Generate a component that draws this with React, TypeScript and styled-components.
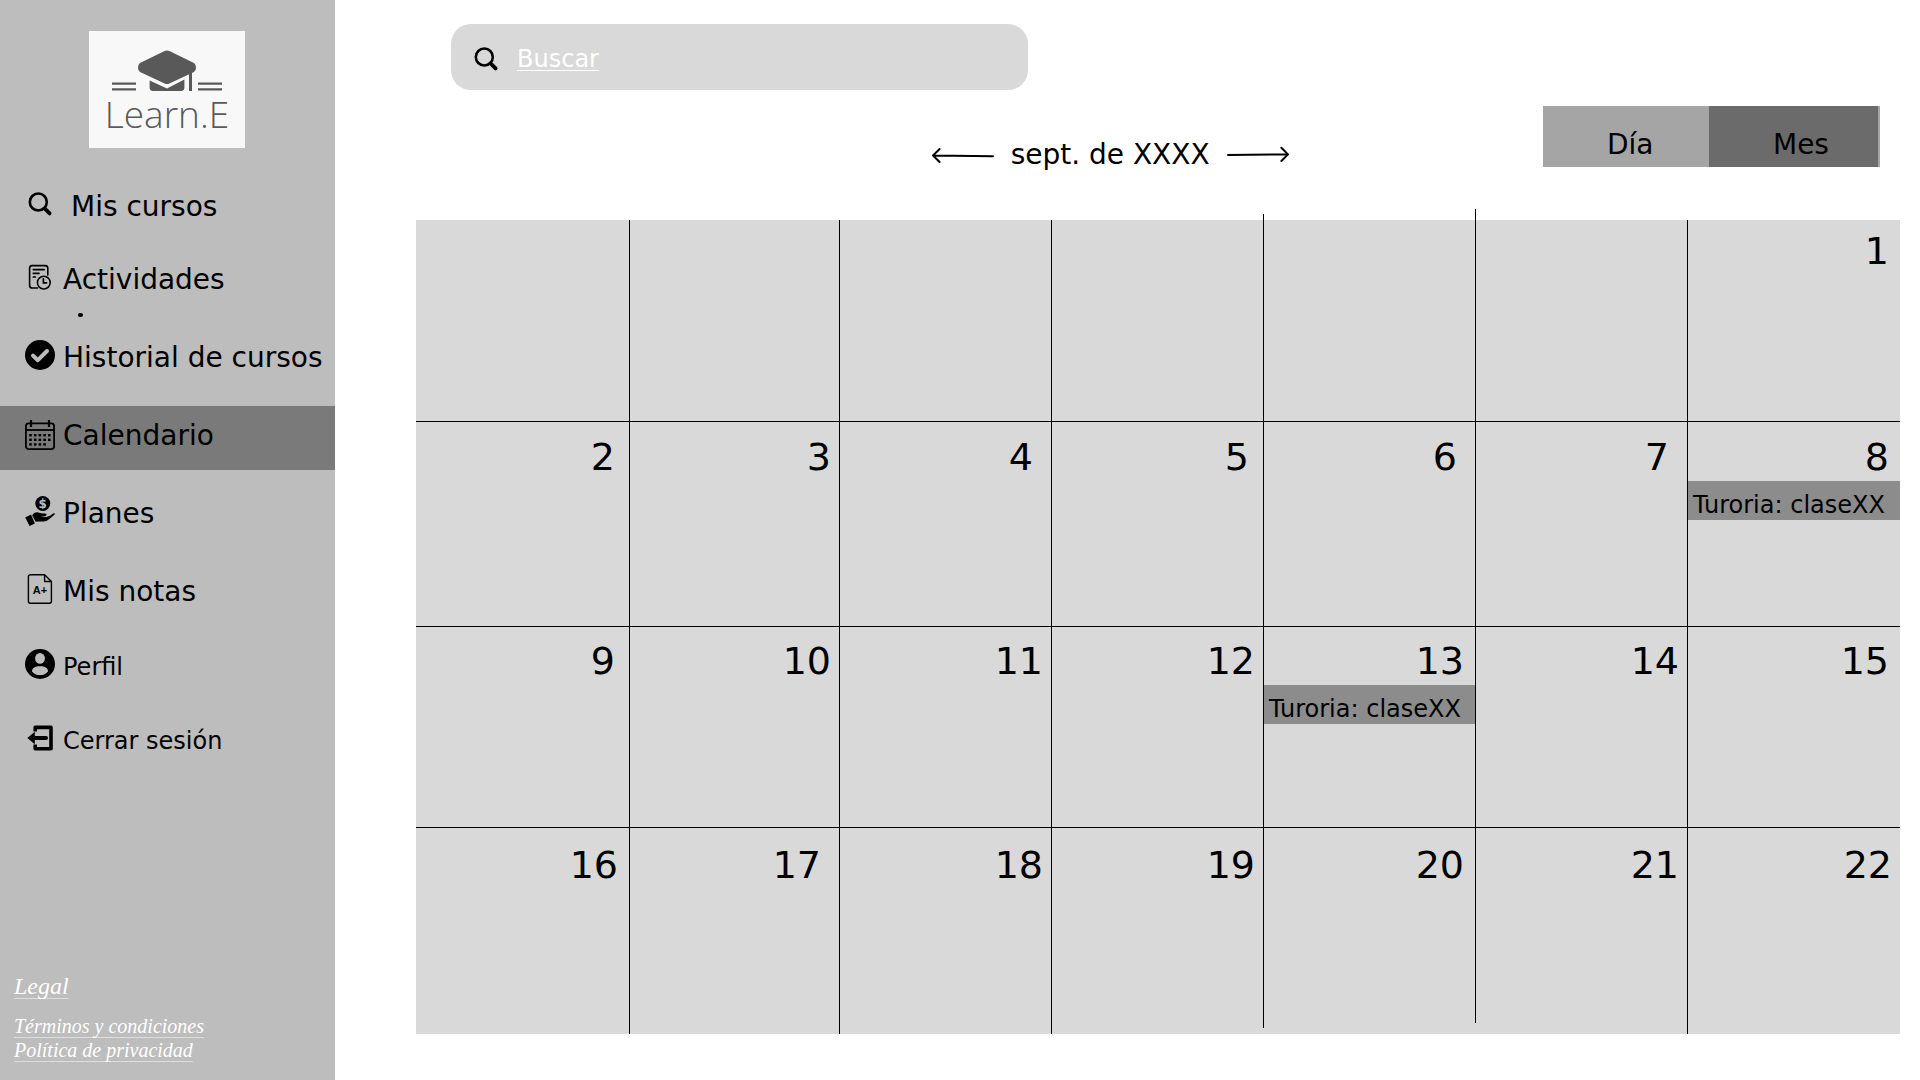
import React from "react";
import styled, { createGlobalStyle } from "styled-components";

const GlobalStyle = createGlobalStyle`
  *, *::before, *::after { box-sizing: border-box; }
  body {
    margin: 0;
    background: #fff;
    color: #000;
    font-family: "DejaVu Sans", Verdana, sans-serif;
    font-size: 28px;
  }
  button, input { font: inherit; color: inherit; border: 0; }
  a { color: inherit; text-decoration: none; }
  svg { display: block; flex: none; }
`;

const Page = styled.div`
  display: flex;
  min-height: 100vh;
`;

const Sidebar = styled.aside`
  display: flex;
  flex-direction: column;
  flex: none;
  width: 335px;
  padding: 31px 0 18px;
  background: #bdbdbd;
`;

const Logo = styled.a`
  display: flex;
  flex-direction: column;
  align-items: center;
  width: 156px;
  height: 117px;
  margin-left: 89px;
  padding-top: 19px;
  background: #f8f8f8;
  color: #595959;
`;

const LogoName = styled.span`
  font-family: "Open Sans", "Noto Sans", sans-serif;
  font-size: 37px;
  font-weight: 300;
  line-height: 44px;
`;

const NavList = styled.ul`
  display: flex;
  flex-direction: column;
  gap: 14px;
  margin: 28px 0 0;
  padding: 0;
  list-style: none;
`;

const NavItem = styled.li`
  position: relative;
`;

const NavLink = styled.a<{ $kind?: "lead" | "small"; $active?: boolean }>`
  display: flex;
  align-items: center;
  gap: ${(p) => (p.$kind === "lead" ? 16 : 8)}px;
  height: ${(p) => (p.$kind ? 60 : 64)}px;
  padding: 0 0 ${(p) => (p.$kind === "lead" ? 0 : 6)}px 25px;
  font-size: ${(p) => (p.$kind === "small" ? 24 : 28)}px;
  white-space: nowrap;
  background: ${(p) => (p.$active ? "#7a7a7a" : "transparent")};

  svg { margin-bottom: ${(p) => (p.$active ? 0 : p.$kind === "small" ? 7 : 4)}px; }
`;

const Dot = styled.span`
  position: absolute;
  left: 78px;
  bottom: -3px;
  width: 5px;
  height: 4px;
  border-radius: 2px;
  background: #000;
`;

const Legal = styled.footer`
  display: flex;
  flex-direction: column;
  align-items: flex-start;
  margin-top: auto;
  padding-left: 14px;
  color: #fff;
  font-family: "Liberation Serif", "Times New Roman", serif;
  font-style: italic;
  font-size: 20px;
  line-height: 24px;
`;

const LegalLink = styled.a<{ $title?: boolean }>`
  margin-bottom: ${(p) => (p.$title ? 16 : 0)}px;
  font-size: ${(p) => (p.$title ? 24 : 20)}px;
  text-decoration: underline;
  text-decoration-color: rgba(255, 255, 255, 0.5);
  text-decoration-thickness: 1px;
  text-decoration-skip-ink: none;
  text-underline-offset: 4px;
`;

const Main = styled.main`
  flex: 1;
  min-width: 0;
  padding: 24px 20px 46px 81px;
`;

const SearchBox = styled.label`
  display: flex;
  align-items: center;
  gap: 16px;
  width: 577px;
  max-width: 100%;
  height: 66px;
  margin-left: 35px;
  padding: 4px 20px 0;
  border-radius: 20px;
  background: #d9d9d9;
`;

const SearchInput = styled.input`
  flex: 1;
  min-width: 0;
  height: 40px;
  padding: 0;
  background: transparent;
  color: #fff;
  font-size: 24px;
  outline: none;

  &::placeholder {
    color: #fff;
    opacity: 1;
    text-decoration: underline;
    text-decoration-thickness: 1px;
    text-underline-offset: 3px;
  }
`;

const Toolbar = styled.div`
  display: grid;
  grid-template-columns: minmax(0, 516fr) auto minmax(0, 254fr) auto;
  align-items: start;
  margin: 16px 20px 49px 0;
`;

const MonthNav = styled.div`
  display: flex;
  grid-column: 2;
  align-items: center;
  gap: 16px;
  padding-top: 33px;
`;

const MonthName = styled.h1`
  margin: 0;
  font-size: 28px;
  font-weight: 400;
  line-height: 32px;
  white-space: nowrap;
`;

const ArrowButton = styled.button`
  padding: 0;
  background: none;
  cursor: pointer;
`;

const ViewSwitch = styled.div`
  display: flex;
  grid-column: 4;
  padding-right: 2px;
  background: #a5a5a5;
`;

const ViewButton = styled.button<{ $active?: boolean }>`
  width: ${(p) => (p.$active ? 169 : 166)}px;
  height: 61px;
  padding: 16px 0 0 64px;
  background: ${(p) => (p.$active ? "#6b6b6b" : "#a5a5a5")};
  text-align: left;
  cursor: pointer;
`;

const Calendar = styled.table`
  width: 100%;
  table-layout: fixed;
  border-spacing: 0;
  background: #d9d9d9;
`;

const Column = styled.col<{ $width?: number }>`
  width: ${(p) => (p.$width ? `${p.$width}px` : "auto")};
`;

const Week = styled.tr<{ $height: number }>`
  height: ${(p) => p.$height}px;
`;

const insets = { tight: 8, normal: 11, wide: 14, loose: 18 };
type Inset = keyof typeof insets;

/* The rule at the left of a cell is a pseudo-element, since some rules
   start above the grid and stop short of its foot by the same length. */
const Day = styled.td<{ $lead: number; $rise: number; $first: boolean; $last: boolean; $rule: boolean }>`
  position: relative;
  padding: ${(p) => p.$lead}px 0 0;
  border-top: ${(p) => (p.$first ? "0" : "1px solid #000")};
  vertical-align: top;

  &::before {
    content: "";
    display: ${(p) => (p.$rule ? "block" : "none")};
    position: absolute;
    left: 0;
    top: ${(p) => (p.$first ? -p.$rise : 0)}px;
    bottom: ${(p) => (p.$last ? p.$rise : 0)}px;
    width: 1px;
    background: #000;
  }
`;

const DayNumber = styled.div<{ $inset: Inset }>`
  padding-right: ${(p) => insets[p.$inset]}px;
  font-size: 38px;
  line-height: 40px;
  text-align: right;
`;

const EventLink = styled.a`
  display: block;
  height: 39px;
  margin: 4px 0 0 1px;
  padding: 8px 0 0 5px;
  overflow: hidden;
  background: #8c8c8c;
  font-size: 24px;
  line-height: 32px;
  white-space: nowrap;
`;

const SearchIcon = () => (
  <svg width="30" height="30" viewBox="0 0 30 30" fill="none" stroke="#000" strokeLinecap="round">
    <circle cx="13.3" cy="13" r="8.5" strokeWidth="2.6" />
    <path d="M19.6 19.4 L24.6 24.4" strokeWidth="3.8" />
  </svg>
);

const TaskIcon = () => (
  <svg width="30" height="30" viewBox="0 0 30 30" fill="none" stroke="#000" strokeWidth="1.6" strokeLinecap="round">
    <path d="M12.5 26 H7.2 A2.6 2.6 0 0 1 4.6 23.4 V6.2 A2.6 2.6 0 0 1 7.2 3.6 H20.2 A2.6 2.6 0 0 1 22.8 6.2 V13" />
    <path d="M8.3 7.6 H19.2 M8.3 11.3 H14 M8.3 15 H10.4" strokeWidth="1.7" />
    <circle cx="18.8" cy="20.6" r="6.4" />
    <path d="M18.4 16.8 V20.8 H21.6" strokeWidth="1.7" />
  </svg>
);

const CheckIcon = () => (
  <svg width="30" height="30" viewBox="0 0 30 30">
    <circle cx="15" cy="15" r="15" />
    <path d="M8 15.6 L12.8 20.2 L22 11" fill="none" stroke="#bdbdbd" strokeWidth="4" strokeLinecap="round" strokeLinejoin="round" />
  </svg>
);

const dotRows = [
  { y: 14, xs: [4.2, 8.9, 13.6, 18.3, 23] },
  { y: 18.6, xs: [4.2, 8.9, 13.6, 18.3, 23] },
  { y: 23.2, xs: [4.2, 8.9, 13.6, 18.3] },
];

const CalendarIcon = () => (
  <svg width="30" height="30" viewBox="0 0 30 30">
    <rect x="0.9" y="3.3" width="28.2" height="25.8" rx="2.8" fill="none" stroke="#000" strokeWidth="1.8" />
    <path d="M1 10 H29" stroke="#000" strokeWidth="1.8" />
    <path d="M6 0 V7 M24 0 V7" stroke="#000" strokeWidth="2.2" />
    {dotRows.map((row) => row.xs.map((x) => <rect key={`${x}-${row.y}`} x={x} y={row.y} width="2.6" height="2.4" />))}
  </svg>
);

const PlansIcon = () => (
  <svg width="30" height="30" viewBox="0 0 30 30">
    <circle cx="17.8" cy="7.5" r="7.5" />
    <text x="17.8" y="12" fill="#bdbdbd" fontFamily="DejaVu Sans, sans-serif" fontSize="12" fontWeight="700" textAnchor="middle">$</text>
    <path d="M0.2 21.5 L6 18.6 L9.8 27.4 L4.6 30 Z" />
    <path d="M7.2 19.4 C8.6 16.8 11 16 13.4 16.5 C15.6 17.2 17.4 17.4 20 17.5 C22 17.7 22 19.8 20.2 20.1 L15.6 20.5 L21.4 20.9 C24.4 20.3 26.6 18.6 28.6 17.2 C29.8 16.9 30.3 17.8 29.6 18.6 C27 21.2 24.4 23.4 21.6 25 C17.8 25.8 14 25.3 10.6 25.7 Z" />
  </svg>
);

const GradesIcon = () => (
  <svg width="30" height="30" viewBox="0 0 30 30">
    <path d="M19.6 0.7 H5.4 A2 2 0 0 0 3.4 2.7 V27.3 A2 2 0 0 0 5.4 29.3 H24.4 A2 2 0 0 0 26.4 27.3 V7.5 Z M19.6 0.7 V7.5 H26.4" fill="none" stroke="#000" strokeWidth="1.4" strokeLinejoin="round" />
    <text x="15" y="19.6" fontFamily="Liberation Sans, sans-serif" fontSize="11" fontWeight="700" textAnchor="middle">A+</text>
  </svg>
);

const ProfileIcon = () => (
  <svg width="30" height="30" viewBox="0 0 30 30">
    <circle cx="15" cy="15" r="15" />
    <ellipse cx="15" cy="9.4" rx="4.9" ry="5.4" fill="#bdbdbd" />
    <path d="M7 22.4 C7 18.8 10 17.2 15 17.2 C20 17.2 23 18.8 23 22.4 C21.2 24.8 18.4 26 15 26 C11.6 26 8.8 24.8 7 22.4 Z" fill="#bdbdbd" />
  </svg>
);

const LogoutIcon = () => (
  <svg width="30" height="30" viewBox="0 0 30 30" fill="none" stroke="#000" strokeWidth="3.6">
    <path d="M10.2 8.5 V4.4 H26 V25.8 H10.2 V21.5" strokeLinejoin="round" />
    <path d="M8 15 H21" strokeWidth="4" strokeLinecap="round" />
    <path d="M2.4 15 L9.8 8.8 V21.2 Z" fill="#000" stroke="none" />
  </svg>
);

const LogoMark = () => (
  <svg width="110" height="42" viewBox="0 0 110 42" fill="#595959">
    <path d="M52.6 1 Q55 -0.2 57.4 1 L82 13 Q84 14.6 84 17.4 Q84 20.6 82 22 L57.4 33.4 Q55 34.6 52.6 33.4 L28 22 Q26 20.6 26 17.4 Q26 14.6 28 13 Z" />
    <path d="M37.6 30.4 L55 38.4 L72.4 29.4 V37.6 Q72.4 41 69 41 H41 Q37.6 41 37.6 37.6 Z" />
    <path d="M77 22 H80 V41 H77 Z" />
    <path d="M0 32.4 H24 V34.8 H0 Z M0 38.2 H24 V40.6 H0 Z M86 32.4 H110 V34.8 H86 Z M86 38.2 H110 V40.6 H86 Z" />
  </svg>
);

const ArrowLeft = () => (
  <svg width="64" height="20" viewBox="0 0 64 20" fill="none" stroke="#000" strokeWidth="2" strokeLinecap="round" strokeLinejoin="round">
    <path d="M2 10.5 L62 11.2 M8.6 4 L2 10.5 L8.6 17" />
  </svg>
);

const ArrowRight = () => (
  <svg width="64" height="20" viewBox="0 0 64 20" fill="none" stroke="#000" strokeWidth="2" strokeLinecap="round" strokeLinejoin="round">
    <path d="M2 10 L62 9.4 M55.4 2.8 L62 9.4 L55.4 16" />
  </svg>
);

type DayData = { n?: number; inset?: Inset; event?: string };

const weeks: { height: number; lead: number; days: DayData[] }[] = [
  { height: 201, lead: 11, days: [{}, {}, {}, {}, {}, {}, { n: 1, inset: "normal" }] },
  {
    height: 205,
    lead: 15,
    days: [
      { n: 2, inset: "wide" },
      { n: 3, inset: "tight" },
      { n: 4, inset: "loose" },
      { n: 5, inset: "wide" },
      { n: 6, inset: "loose" },
      { n: 7, inset: "loose" },
      { n: 8, inset: "normal", event: "Turoria: claseXX" },
    ],
  },
  {
    height: 201,
    lead: 14,
    days: [
      { n: 9, inset: "wide" },
      { n: 10, inset: "tight" },
      { n: 11, inset: "tight" },
      { n: 12, inset: "tight" },
      { n: 13, inset: "normal", event: "Turoria: claseXX" },
      { n: 14, inset: "tight" },
      { n: 15, inset: "normal" },
    ],
  },
  {
    height: 207,
    lead: 17,
    days: [
      { n: 16, inset: "normal" },
      { n: 17, inset: "loose" },
      { n: 18, inset: "tight" },
      { n: 19, inset: "tight" },
      { n: 20, inset: "normal" },
      { n: 21, inset: "tight" },
      { n: 22, inset: "tight" },
    ],
  },
];

const columnWidths = [213, 210, 212, 212, 212, 212, undefined];
const ruleRise = [0, 0, 0, 0, 6, 11, 0];

export default function App() {
  return (
    <>
      <GlobalStyle />
      <Page>
        <Sidebar>
          <Logo href="#inicio">
            <LogoMark />
            <LogoName>Learn.E</LogoName>
          </Logo>
          <nav>
            <NavList>
              <NavItem>
                <NavLink href="#cursos" $kind="lead"><SearchIcon />Mis cursos</NavLink>
              </NavItem>
              <NavItem>
                <NavLink href="#actividades"><TaskIcon />Actividades</NavLink>
                <Dot />
              </NavItem>
              <NavItem>
                <NavLink href="#historial"><CheckIcon />Historial de cursos</NavLink>
              </NavItem>
              <NavItem>
                <NavLink href="#calendario" $active aria-current="page"><CalendarIcon />Calendario</NavLink>
              </NavItem>
              <NavItem>
                <NavLink href="#planes"><PlansIcon />Planes</NavLink>
              </NavItem>
              <NavItem>
                <NavLink href="#notas"><GradesIcon />Mis notas</NavLink>
              </NavItem>
              <NavItem>
                <NavLink href="#perfil" $kind="small"><ProfileIcon />Perfil</NavLink>
              </NavItem>
              <NavItem>
                <NavLink href="#salir" $kind="small"><LogoutIcon />Cerrar sesión</NavLink>
              </NavItem>
            </NavList>
          </nav>
          <Legal>
            <LegalLink href="#legal" $title>Legal</LegalLink>
            <LegalLink href="#terminos">Términos y condiciones</LegalLink>
            <LegalLink href="#privacidad">Política de privacidad</LegalLink>
          </Legal>
        </Sidebar>
        <Main>
          <SearchBox>
            <SearchIcon />
            <SearchInput type="search" placeholder="Buscar" aria-label="Buscar" />
          </SearchBox>
          <Toolbar>
            <MonthNav>
              <ArrowButton type="button" aria-label="Mes anterior"><ArrowLeft /></ArrowButton>
              <MonthName>sept. de XXXX</MonthName>
              <ArrowButton type="button" aria-label="Mes siguiente"><ArrowRight /></ArrowButton>
            </MonthNav>
            <ViewSwitch>
              <ViewButton type="button" aria-pressed={false}>Día</ViewButton>
              <ViewButton type="button" aria-pressed $active>Mes</ViewButton>
            </ViewSwitch>
          </Toolbar>
          <Calendar>
            <colgroup>
              {columnWidths.map((width, i) => <Column key={i} $width={width} />)}
            </colgroup>
            <tbody>
              {weeks.map((week, w) => (
                <Week key={w} $height={week.height}>
                  {week.days.map((day, d) => (
                    <Day
                      key={d}
                      $lead={week.lead}
                      $rise={ruleRise[d]}
                      $first={w === 0}
                      $last={w === weeks.length - 1}
                      $rule={d > 0}
                    >
                      {day.n && <DayNumber $inset={day.inset ?? "normal"}>{day.n}</DayNumber>}
                      {day.event && <EventLink href="#tutoria">{day.event}</EventLink>}
                    </Day>
                  ))}
                </Week>
              ))}
            </tbody>
          </Calendar>
        </Main>
      </Page>
    </>
  );
}
